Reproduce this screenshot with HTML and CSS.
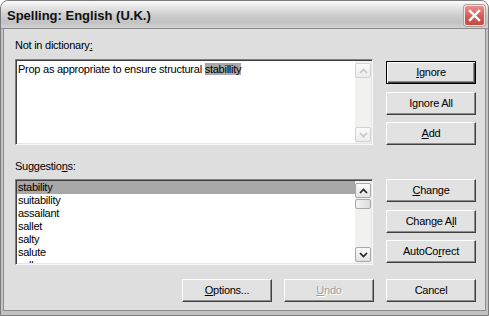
FILE: index.html
```html
<!DOCTYPE html>
<html>
<head>
<meta charset="utf-8">
<title>Spelling: English (U.K.)</title>
<link rel="stylesheet" href="styles.css">
</head>
<body>
<div class="window">
  <div class="titlebar">
    <span class="title">Spelling: English (U.K.)</span>
    <span class="close">
      <svg width="19" height="19" viewBox="0 0 19 19">
        <path d="M5 5 L14 14 M14 5 L5 14" stroke="#fff" stroke-width="2.4" stroke-linecap="square"/>
      </svg>
    </span>
  </div>

  <div class="client">
    <div class="section first">
      <div class="main">
        <div class="label">Not in dictionary<u>:</u></div>
        <div class="field textbox">
          <div class="text">Prop as appropriate to ensure structural <span class="sel">stabillity</span></div>
          <div class="sb off">
            <div class="arrow"><svg width="9" height="6" viewBox="0 0 9 6"><polyline points="1,5 4.5,1.5 8,5" fill="none" stroke="#c4c4c4" stroke-width="1.6"/></svg></div>
            <div class="track"></div>
            <div class="arrow"><svg width="9" height="6" viewBox="0 0 9 6"><polyline points="1,1 4.5,4.5 8,1" fill="none" stroke="#c4c4c4" stroke-width="1.6"/></svg></div>
          </div>
        </div>
      </div>
      <div class="buttons top">
        <div class="btn default"><span><u>I</u>gnore</span></div>
        <div class="btn"><span>Ignore All</span></div>
        <div class="btn"><span><u>A</u>dd</span></div>
      </div>
    </div>

    <div class="section second">
      <div class="main">
        <div class="label">Suggestio<u>n</u>s:</div>
        <div class="field listbox">
          <ul class="items">
            <li class="picked">stability</li>
            <li>suitability</li>
            <li>assailant</li>
            <li>sallet</li>
            <li>salty</li>
            <li>salute</li>
            <li>sallow</li>
          </ul>
          <div class="sb">
            <div class="arrow"><svg width="9" height="6" viewBox="0 0 9 6"><polyline points="1,5 4.5,1.5 8,5" fill="none" stroke="#222" stroke-width="1.7"/></svg></div>
            <div class="thumb"></div>
            <div class="track"></div>
            <div class="arrow"><svg width="9" height="6" viewBox="0 0 9 6"><polyline points="1,1 4.5,4.5 8,1" fill="none" stroke="#222" stroke-width="1.7"/></svg></div>
          </div>
        </div>
      </div>
      <div class="buttons low">
        <div class="btn"><span><u>C</u>hange</span></div>
        <div class="btn"><span>Change A<u>l</u>l</span></div>
        <div class="btn"><span>AutoCo<u>r</u>rect</span></div>
      </div>
    </div>

    <div class="footer">
      <div class="btn"><span><u>O</u>ptions...</span></div>
      <div class="btn disabled"><span><u>U</u>ndo</span></div>
      <div class="btn"><span>Cancel</span></div>
    </div>
  </div>
</div>
</body>
</html>
```

FILE: styles.css
```css
body {
  margin: 0;
  font-family: "Liberation Sans", Arial, sans-serif;
  font-size: 11px;
  letter-spacing: -0.25px;
  color: #000;
  background: #fff;
}

.window {
  width: 489px;
  height: 316px;
  box-sizing: border-box;
  border: 1px solid #7c7c7c;
  border-radius: 8px 8px 0 0;
  background: #c2c2c2;
  display: flex;
  flex-direction: column;
  overflow: hidden;
}

/* title bar */
.titlebar {
  height: 27px;
  flex: none;
  display: flex;
  justify-content: space-between;
  align-items: flex-start;
  padding: 0 3px 0 6px;
  background: linear-gradient(#fbfbfb 0%, #e6e6e6 22%, #cbcbcb 55%, #c3c3c3 80%, #d2d2d2 100%);
  border-bottom: 1px solid #8e8ec4;
}

.title {
  font-size: 13px;
  font-weight: bold;
  letter-spacing: 0;
  line-height: 15px;
  margin-top: 7px;
  color: #111;
}

.close {
  width: 21px;
  height: 21px;
  box-sizing: border-box;
  margin-top: 4px;
  border: 1px solid #f2e4e4;
  border-radius: 3px;
  background: linear-gradient(#e9928c, #d0584f 60%, #c64a44);
  box-shadow: 0 0 0 1px #b0a0a0;
  display: flex;
  align-items: center;
  justify-content: center;
}

.close svg {
  display: block;
}

/* dialog body */
.client {
  flex: 1;
  margin: 0 3px 5px 3px;
  padding: 10px 9px 0 11px;
  background: #dedede;
  box-shadow: 0 0 0 1px #8c8c8c;
}

.section {
  display: flex;
  gap: 13px;
}

.section.second {
  margin-top: 15px;
}

.main {
  width: 358px;
  display: flex;
  flex-direction: column;
}

.label {
  line-height: 13px;
  height: 13px;
}

.field {
  box-sizing: border-box;
  height: 86px;
  padding: 1px;
  display: flex;
  background: #fff;
  border: 1px solid;
  border-color: #808080 #f8f8f8 #f8f8f8 #808080;
  box-shadow: inset 1px 1px #404040, inset -1px -1px #e6e6e6;
}

.textbox {
  margin-top: 7px;
}

.listbox {
  margin-top: 6px;
}

.text {
  flex: 1;
  padding: 2px 0 0 1px;
  line-height: 13px;
  white-space: nowrap;
  overflow: hidden;
}

.sel {
  background: #a8a8a8;
}

.items {
  flex: 1;
  margin: 0;
  padding: 0;
  list-style: none;
  overflow: hidden;
}

.items li {
  height: 13px;
  line-height: 13px;
  padding-left: 1px;
}

.items li.picked {
  background: #a8a8a8;
}

/* scroll bars */
.sb {
  width: 16px;
  flex: none;
  display: flex;
  flex-direction: column;
  gap: 1px;
  padding: 2px 0 1px 0;
  box-sizing: border-box;
  background: #f1f1ef;
}

.sb .track {
  flex: 1;
}

.sb .arrow {
  height: 15px;
  box-sizing: border-box;
  border: 1px solid #a8a8a8;
  border-radius: 2px;
  background: linear-gradient(#fafafa, #e2e2e2);
  display: flex;
  align-items: center;
  justify-content: center;
}

.sb.off .arrow {
  border-color: #d2d2d2;
  background: linear-gradient(#fbfbfb, #ececec);
}

.sb .thumb {
  height: 10px;
  box-sizing: border-box;
  border: 1px solid #a8a8a8;
  border-radius: 2px;
  background: linear-gradient(90deg, #f4f4f4, #dcdcdc);
}

/* buttons */
.buttons {
  width: 90px;
  display: flex;
  flex-direction: column;
  gap: 7.5px;
}

.buttons.top {
  padding-top: 22px;
}

.buttons.low {
  padding-top: 19px;
}

.btn {
  width: 90px;
  height: 23px;
  box-sizing: border-box;
  background: #e2e2e2;
  border: 1px solid;
  border-color: #fff #404040 #404040 #fff;
  box-shadow: inset -1px -1px #8c8c8c;
  display: flex;
  align-items: center;
  justify-content: center;
}

.btn span {
  line-height: 13px;
}

.btn.default {
  border-color: #000;
  box-shadow: inset 1px 1px #fff, inset -1px -1px #404040, inset -2px -2px #8c8c8c;
}

.btn.disabled {
  color: #a0a0a0;
  text-shadow: 1px 1px #fff;
}

.footer {
  display: flex;
  justify-content: flex-end;
  gap: 12px;
  margin-top: 14px;
}
```
